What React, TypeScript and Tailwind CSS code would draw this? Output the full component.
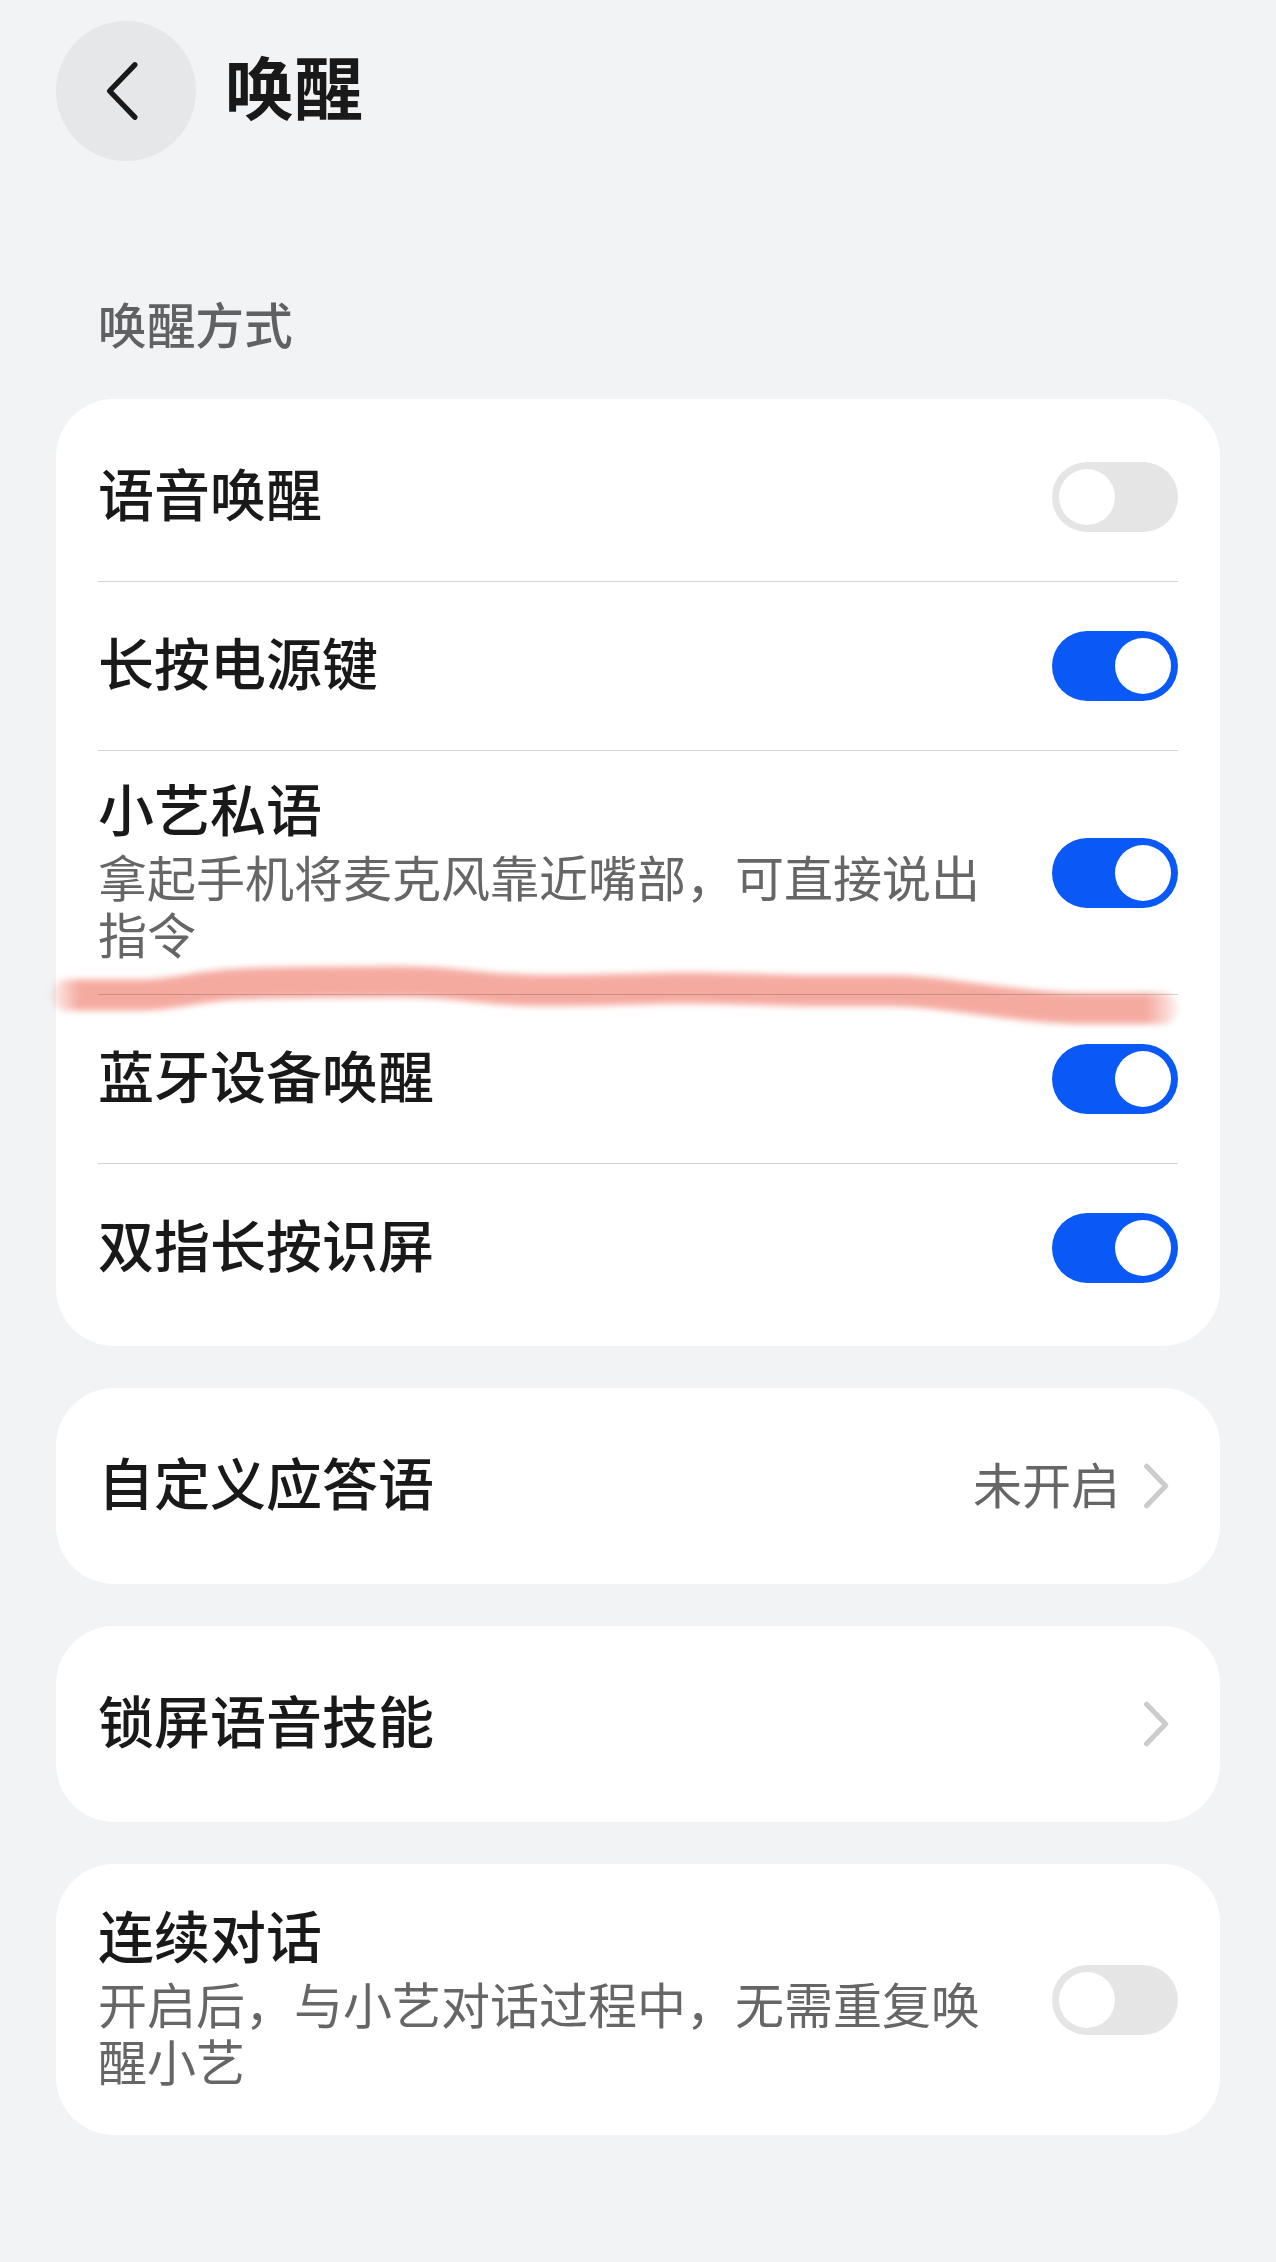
import React, { useState } from "react";

interface SwitchProps {
  checked: boolean;
  onChange: () => void;
}

const Switch = ({ checked, onChange }: SwitchProps) => (
  <button
    role="switch"
    aria-checked={checked}
    onClick={onChange}
    className={`flex h-[70px] w-[126px] shrink-0 items-center rounded-full px-[7px] ${
      checked ? "justify-end bg-[#0a59f7]" : "justify-start bg-[#e5e5e5]"
    }`}
  >
    <span className="size-14 rounded-full bg-white" />
  </button>
);

const ChevronRight = () => (
  <svg width="28" height="50" viewBox="0 0 28 50" fill="none" className="mr-[9px] shrink-0">
    <path
      d="M5.6 5.3 L24.6 25 L5.6 44.7"
      stroke="#cccccc"
      strokeWidth="5.2"
      strokeLinecap="round"
      strokeLinejoin="round"
    />
  </svg>
);

interface RowProps {
  title: string;
  desc?: string;
  className: string;
  children: React.ReactNode;
}

const Row = ({ title, desc, className, children }: RowProps) => (
  <div className={`flex items-center justify-between ${className}`}>
    <div className="w-[890px] pb-2.5">
      <div className="text-[56px] leading-[66px] font-medium text-[#191919]">{title}</div>
      {desc && <div className="mt-[7px] text-[49px] leading-[57px] text-[#666666]">{desc}</div>}
    </div>
    {children}
  </div>
);

// Highlighter line under the whisper row
const MarkerStroke = () => (
  <svg
    width="1148"
    height="80"
    viewBox="44 956 1148 80"
    fill="none"
    className="pointer-events-none absolute -bottom-[42px] -left-[54px] max-w-none mix-blend-multiply"
  >
    <defs>
      <linearGradient id="marker" gradientUnits="userSpaceOnUse" x1="50" y1="0" x2="1180" y2="0">
        <stop offset="0" stopColor="#f5aaa0" stopOpacity="0.1" />
        <stop offset="0.026" stopColor="#f5aaa0" />
        <stop offset="0.97" stopColor="#f5aaa0" />
        <stop offset="1" stopColor="#f5aaa0" stopOpacity="0.1" />
      </linearGradient>
      <filter id="soft" filterUnits="userSpaceOnUse" x="44" y="956" width="1148" height="80">
        <feGaussianBlur stdDeviation="3" />
      </filter>
    </defs>
    <path
      d="M66 995 H140 C175 995 200 985 245 983.8 S340 981.8 400 981.8 S480 990 540 990.5 S640 988 685 988 S780 991 830 990.8 S900 990 930 993 S1030 1008.5 1085 1008.5 H1163"
      stroke="url(#marker)"
      strokeWidth="31"
      strokeLinecap="round"
      filter="url(#soft)"
    />
  </svg>
);

const App = () => {
  const [settings, setSettings] = useState({
    voice: false,
    power: true,
    whisper: true,
    bluetooth: true,
    twoFinger: true,
    continuous: false,
  });

  const toggle = (key: keyof typeof settings) =>
    setSettings((prev) => ({ ...prev, [key]: !prev[key] }));

  return (
    <div className="h-[2262px] w-[1276px] overflow-hidden bg-[#f1f3f5] px-14 pt-[21px] font-['Noto_Sans_CJK_SC',sans-serif]">
      {/* Header */}
      <header className="flex h-[140px] items-center">
        <button className="flex size-[140px] items-center justify-center rounded-full bg-[#e6e7e8]">
          <svg width="140" height="140" viewBox="0 0 140 140" fill="none">
            <path
              d="M78.8 43.8 L53.6 70 L78.8 96.2"
              stroke="#191919"
              strokeWidth="5.4"
              strokeLinecap="round"
              strokeLinejoin="round"
            />
          </svg>
        </button>
        <h1 className="ml-[29px] pb-3 text-[69px] leading-[80px] font-bold text-[#191919]">唤醒</h1>
      </header>

      <h2 className="mt-[134px] px-[42px] text-[48.7px] leading-[57px] font-medium text-[#606162]">
        唤醒方式
      </h2>

      <main className="mt-[47px] flex flex-col gap-[42px]">
        {/* Wake-up methods */}
        <section className="h-[947px] rounded-[58px] bg-white px-[42px] py-[14px]">
          <Row title="语音唤醒" className="h-[169px] border-b border-[#d4d4d4]">
            <Switch checked={settings.voice} onChange={() => toggle("voice")} />
          </Row>
          <Row title="长按电源键" className="h-[169px] border-b border-[#d4d4d4]">
            <Switch checked={settings.power} onChange={() => toggle("power")} />
          </Row>
          <Row
            title="小艺私语"
            desc="拿起手机将麦克风靠近嘴部，可直接说出指令"
            className="relative h-[244px] border-b border-[#d4d4d4]"
          >
            <Switch checked={settings.whisper} onChange={() => toggle("whisper")} />
            <MarkerStroke />
          </Row>
          <Row title="蓝牙设备唤醒" className="h-[169px] border-b border-[#d4d4d4]">
            <Switch checked={settings.bluetooth} onChange={() => toggle("bluetooth")} />
          </Row>
          <Row title="双指长按识屏" className="h-[168px]">
            <Switch checked={settings.twoFinger} onChange={() => toggle("twoFinger")} />
          </Row>
        </section>

        <section className="rounded-[58px] bg-white px-[42px]">
          <Row title="自定义应答语" className="h-[196px]">
            <div className="flex items-center gap-[21px]">
              <span className="pb-2 text-[49px] leading-[57px] whitespace-nowrap text-[#666666]">未开启</span>
              <ChevronRight />
            </div>
          </Row>
        </section>

        <section className="rounded-[58px] bg-white px-[42px]">
          <Row title="锁屏语音技能" className="h-[196px]">
            <ChevronRight />
          </Row>
        </section>

        <section className="rounded-[58px] bg-white px-[42px]">
          <Row
            title="连续对话"
            desc="开启后，与小艺对话过程中，无需重复唤醒小艺"
            className="h-[271px]"
          >
            <Switch checked={settings.continuous} onChange={() => toggle("continuous")} />
          </Row>
        </section>
      </main>
    </div>
  );
};

export default App;
